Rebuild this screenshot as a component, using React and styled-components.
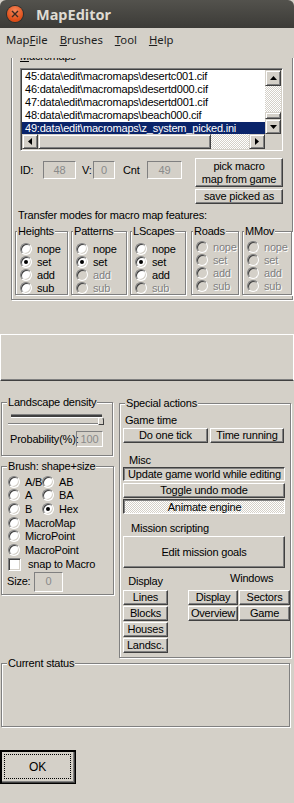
import React from 'react';
import styled, { createGlobalStyle, css } from 'styled-components';

const FACE = '#d4d0c8';
const FONT = `"Liberation Sans Narrow", "Liberation Sans", Arial, sans-serif`;

const GlobalStyle = createGlobalStyle`
  body {
    margin: 0;
    background: #ecebe8;
  }
`;

const Window = styled.div`
  width: 294px;
  height: 803px;
  overflow: hidden;
  background: ${FACE};
  font-family: ${FONT};
  font-size: 11px;
  letter-spacing: -0.2px;
  color: #000;
  display: flex;
  flex-direction: column;
`;

const TitleBar = styled.header`
  height: 28px;
  flex-shrink: 0;
  display: flex;
  align-items: center;
  gap: 13px;
  padding-left: 7px;
  background: linear-gradient(#53524d, #3c3b37);
  border-radius: 6px 6px 0 0;
  color: #dfdbd2;
  letter-spacing: 0;
  font: bold 14.5px 'Noto Sans', 'Liberation Sans', sans-serif;
`;

const CloseBtn = styled.span`
  width: 16px;
  height: 16px;
  border-radius: 50%;
  background: radial-gradient(circle at 50% 30%, #f6875a, #de4d17 70%);
  box-shadow: 0 0 0 1px #2f2e2b;
  display: flex;
  align-items: center;
  justify-content: center;
`;

const MenuBar = styled.nav`
  height: 30px;
  flex-shrink: 0;
  display: flex;
  align-items: flex-start;
  gap: 12px;
  padding: 4px 0 0 6px;
  box-sizing: border-box;
  font: 11.3px 'Noto Sans', 'Liberation Sans', sans-serif;
  letter-spacing: 0;
  line-height: 15px;
  color: #1e1e1e;
`;

const Client = styled.main`
  flex: 1;
  overflow: hidden;
  display: flex;
  flex-direction: column;
`;

const Group = styled.section`
  position: relative;
  box-sizing: border-box;
  flex-shrink: 0;
  width: ${(p) => p.$w}px;
  height: ${(p) => p.$h}px;
  margin: ${(p) => p.$m || '0'};
  border: 1px solid #808080;
  box-shadow: inset 1px 1px #fff, 1px 1px #fff;
  display: flex;
  flex-direction: column;
`;

const Legend = styled.span`
  position: absolute;
  top: -7px;
  left: ${(p) => (p.$x === undefined ? 5 : p.$x)}px;
  padding: 0 1px;
  line-height: 13px;
  background: ${FACE};
  white-space: nowrap;
`;

const Text = styled.div`
  line-height: 13px;
  white-space: nowrap;
  margin: ${(p) => p.$m || '0'};
  width: ${(p) => (p.$w ? `${p.$w}px` : 'auto')};
  flex-shrink: 0;
  text-align: ${(p) => p.$align || 'left'};
  ${(p) =>
    p.$dis &&
    css`
      color: #808080;
      text-shadow: 1px 1px #fff;
    `}
`;

const ListBox = styled.div`
  box-sizing: border-box;
  width: 263px;
  height: 83px;
  margin: 11px 0 0 8px;
  padding: 1px;
  border: 1px solid;
  border-color: #808080 #fff #fff #808080;
  box-shadow: inset 1px 1px #404040, inset -1px -1px ${FACE};
  display: grid;
  grid-template-columns: 1fr 16px;
  grid-template-rows: 1fr 15px;
  background: #fff;
`;

const Items = styled.div`
  overflow: hidden;
`;

const Item = styled.div`
  height: 13px;
  line-height: 13px;
  padding-left: 3px;
  white-space: nowrap;
  ${(p) =>
    p.$sel &&
    css`
      background: #0a246a;
      color: #fff;
    `}
`;

const dither = css`
  background: repeating-conic-gradient(#fff 0 25%, ${FACE} 0 50%) 0 0 / 2px 2px;
`;

const VScroll = styled.div`
  display: flex;
  flex-direction: column;
`;

const HScroll = styled.div`
  display: flex;
`;

const Track = styled.div`
  flex: 1;
  ${dither}
`;

const Corner = styled.div`
  background: ${FACE};
`;

const ScrollPart = styled.div`
  box-sizing: border-box;
  flex-shrink: 0;
  width: ${(p) => (p.$w ? `${p.$w}px` : 'auto')};
  height: ${(p) => (p.$h ? `${p.$h}px` : 'auto')};
  background: ${FACE};
  border: 1px solid;
  border-color: ${FACE} #404040 #404040 ${FACE};
  box-shadow: inset 1px 1px #fff, inset -1px -1px #808080;
  display: flex;
  align-items: center;
  justify-content: center;
`;

const Row = styled.div`
  display: flex;
  align-items: ${(p) => p.$align || 'center'};
  margin: ${(p) => p.$m || '0'};
  gap: ${(p) => p.$gap || 0}px;
  flex-shrink: 0;
`;

const Col = styled.div`
  display: flex;
  flex-direction: column;
  margin: ${(p) => p.$m || '0'};
  gap: ${(p) => p.$gap || 0}px;
  flex-shrink: 0;
  width: ${(p) => (p.$w ? `${p.$w}px` : 'auto')};
`;

const Field = styled.div`
  box-sizing: border-box;
  flex-shrink: 0;
  width: ${(p) => p.$w}px;
  height: ${(p) => p.$h || 18}px;
  margin: ${(p) => p.$m || '0'};
  border: 1px solid;
  border-color: #808080 #fff #fff #808080;
  color: #8a8a8a;
  display: flex;
  align-items: center;
  justify-content: center;
  line-height: 13px;
`;

const Button = styled.div`
  box-sizing: border-box;
  flex-shrink: 0;
  width: ${(p) => p.$w}px;
  height: ${(p) => p.$h || 15}px;
  margin: ${(p) => p.$m || '0'};
  background: ${FACE};
  border: 1px solid;
  border-color: #fff #404040 #404040 #fff;
  box-shadow: inset -1px -1px #808080;
  display: flex;
  flex-direction: column;
  align-items: center;
  justify-content: center;
  line-height: 13px;
  text-align: center;
  white-space: nowrap;
  ${(p) =>
    p.$pressed &&
    css`
      border-color: #404040 #fff #fff #404040;
      box-shadow: inset 1px 1px #808080;
      padding: 1px 0 0 1px;
    `}
  ${(p) => p.$dither && dither}
`;

const Panel = styled.div`
  box-sizing: border-box;
  height: 47px;
  margin-top: 34px;
  flex-shrink: 0;
  border: 1px solid #fff;
  border-bottom-color: #404040;
  box-shadow: inset 0 -1px #808080;
`;

const RadioWrap = styled.div`
  display: flex;
  align-items: center;
  gap: 5px;
  height: ${(p) => p.$h || 13}px;
  flex-shrink: 0;
  width: ${(p) => (p.$w ? `${p.$w}px` : 'auto')};
  white-space: nowrap;
  ${(p) =>
    p.$dis &&
    css`
      color: #808080;
      text-shadow: 1px 1px #fff;
    `}
`;

const Circle = styled.span`
  box-sizing: border-box;
  position: relative;
  flex-shrink: 0;
  width: 12px;
  height: 12px;
  border-radius: 50%;
  border: 1px solid;
  border-color: #808080 #fff #fff #808080;
  box-shadow: inset 1px 1px #404040, inset -1px -1px ${FACE};
  background: ${(p) => (p.$dis ? FACE : '#fff')};
  ${(p) =>
    p.$on &&
    css`
      &::after {
        content: '';
        position: absolute;
        left: 3px;
        top: 3px;
        width: 4px;
        height: 4px;
        border-radius: 50%;
        background: #000;
      }
    `}
`;

const Check = styled.span`
  box-sizing: border-box;
  flex-shrink: 0;
  width: 13px;
  height: 13px;
  border: 1px solid;
  border-color: #808080 #fff #fff #808080;
  box-shadow: inset 1px 1px #404040, inset -1px -1px ${FACE};
  background: #fff;
`;

const Channel = styled.div`
  width: 91px;
  height: 4px;
  margin: 11px 0 0 9px;
  background: linear-gradient(#808080 0 1px, #404040 1px 3px, #fff 3px);
`;

const Rail = styled.div`
  position: relative;
  width: 96px;
  height: 2px;
  margin: 5px 0 0 6px;
  background: linear-gradient(#808080 0 1px, #fff 1px);
`;

const Thumb = styled.span`
  position: absolute;
  right: 0;
  bottom: 0;
  box-sizing: border-box;
  width: 6px;
  height: 8px;
  background: ${FACE};
  border: 1px solid;
  border-color: #fff #404040 #404040 #fff;
  border-radius: 2px 3px 0 0;
`;

const SubGroupRadios = styled.div`
  display: flex;
  flex-direction: column;
  padding: ${(p) => (p.$up ? 8 : 10)}px 0 0 4px;
`;

const OkButton = styled.div`
  box-sizing: border-box;
  width: 76px;
  height: 34px;
  margin-top: 23px;
  flex-shrink: 0;
  border: 1px solid #000;
  border-width: 2px 1px 1px 2px;
  box-shadow: inset -1px -1px #404040, inset -2px -2px #808080;
  padding: 2px 4px 4px 2px;
  display: flex;
`;

const FocusRect = styled.div`
  flex: 1;
  border: 1px dotted #000;
  display: flex;
  align-items: center;
  justify-content: center;
  font-size: 12px;
`;

const Arrow = ({ dir }) => {
  const vert = dir === 'up' || dir === 'down';
  const pts = {
    up: '0,4 3.5,0 7,4',
    down: '0,0 3.5,4 7,0',
    left: '4,0 0,3.5 4,7',
    right: '0,0 4,3.5 0,7',
  }[dir];
  return (
    <svg width={vert ? 7 : 4} height={vert ? 4 : 7} viewBox={vert ? '0 0 7 4' : '0 0 4 7'}>
      <polygon points={pts} fill="#000" />
    </svg>
  );
};

const Radio = ({ label, on, dis, w, h }) => (
  <RadioWrap $dis={dis} $w={w} $h={h}>
    <Circle $on={on} $dis={dis} />
    {label}
  </RadioWrap>
);

const MAPS = [
  '45:data\\edit\\macromaps\\desertc001.cif',
  '46:data\\edit\\macromaps\\desertd000.cif',
  '47:data\\edit\\macromaps\\desertd001.cif',
  '48:data\\edit\\macromaps\\beach000.cif',
  '49:data\\edit\\macromaps\\z_system_picked.ini',
];

const MODES = ['nope', 'set', 'add', 'sub'];

const FEATURES = [
  { name: 'Heights', w: 53, on: 1, dis: [] },
  { name: 'Patterns', w: 56, on: 1, dis: [2, 3] },
  { name: 'LScapes', w: 56, on: 1, dis: [3] },
  { name: 'Roads', w: 48, on: -1, dis: [0, 1, 2, 3], up: true, gap: 5 },
  { name: 'MMov', w: 50, on: -1, dis: [0, 1, 2, 3], up: true, gap: 3 },
];

export default function App() {
  return (
    <Window>
      <GlobalStyle />
      <TitleBar>
        <CloseBtn>
          <svg width="8" height="8" viewBox="0 0 8 8">
            <path d="M1 1 L7 7 M7 1 L1 7" stroke="#3b2a22" strokeWidth="1.4" />
          </svg>
        </CloseBtn>
        MapEditor
      </TitleBar>
      <MenuBar>
        <span>
          Map<u>F</u>ile
        </span>
        <span>
          <u>B</u>rushes
        </span>
        <span>
          <u>T</u>ool
        </span>
        <span>
          <u>H</u>elp
        </span>
      </MenuBar>

      <Client>
        <Group $w={282} $h={244} $m="-2px 0 0 11px">
          <Legend $x={7}>
            <u>M</u>acromaps
          </Legend>
          <ListBox>
            <Items>
              {MAPS.map((m, i) => (
                <Item key={m} $sel={i === MAPS.length - 1}>
                  {m}
                </Item>
              ))}
            </Items>
            <VScroll>
              <ScrollPart $h={16}>
                <Arrow dir="up" />
              </ScrollPart>
              <Track />
              <ScrollPart $h={7} />
              <ScrollPart $h={15}>
                <Arrow dir="down" />
              </ScrollPart>
            </VScroll>
            <HScroll>
              <ScrollPart $w={16}>
                <Arrow dir="left" />
              </ScrollPart>
              <ScrollPart $w={173} />
              <Track />
              <ScrollPart $w={16}>
                <Arrow dir="right" />
              </ScrollPart>
            </HScroll>
            <Corner />
          </ListBox>

          <Row $align="flex-start" $m="7px 0 0 8px">
            <Row $m="3px 0 0 0">
              <Text $w={23}>ID:</Text>
              <Field $w={33}>48</Field>
              <Text $w={11} $m="0 0 0 6px">
                V:
              </Text>
              <Field $w={22}>0</Field>
              <Text $w={24} $m="0 0 0 8px">
                Cnt
              </Text>
              <Field $w={35}>49</Field>
            </Row>
            <Col $m="0 0 0 13px" $gap={2}>
              <Button $w={88} $h={29}>
                <span>pick macro</span>
                <span>map from game</span>
              </Button>
              <Button $w={88} $h={15}>
                save picked as
              </Button>
            </Col>
          </Row>

          <Text $m="5px 0 0 6px">Transfer modes for macro map features:</Text>

          <Row $align="flex-start" $m="9px 0 0 3px">
            {FEATURES.map((f, fi) => (
              <Group key={f.name} $w={f.w} $h={64} $m={fi === 0 ? '0' : `0 0 0 ${f.gap || 3}px`}>
                <Legend $x={1}>{f.name}</Legend>
                <SubGroupRadios $up={f.up}>
                  {MODES.map((m, i) => (
                    <Radio key={m} label={m} on={f.on === i} dis={f.dis.includes(i)} />
                  ))}
                </SubGroupRadios>
              </Group>
            ))}
          </Row>
        </Group>

        <Panel />

        <Row $align="flex-start" $m="21px 0 0 1px">
          <Col>
            <Group $w={112} $h={54}>
              <Legend>Landscape density</Legend>
              <Channel />
              <Rail>
                <Thumb />
              </Rail>
              <Row $m="6px 0 0 8px">
                <Text $w={66}>Probability(%):</Text>
                <Field $w={27} $h={16}>
                  100
                </Field>
              </Row>
            </Group>
            <Group $w={113} $h={129} $m="10px 0 0 0">
              <Legend>Brush: shape+size</Legend>
              <Col $m="8px 0 0 6px">
                <Row>
                  <Radio label="A/B" w={34} h={13.6} />
                  <Radio label="AB" h={13.6} />
                </Row>
                <Row>
                  <Radio label="A" w={34} h={13.6} />
                  <Radio label="BA" h={13.6} />
                </Row>
                <Row>
                  <Radio label="B" w={34} h={13.6} />
                  <Radio label="Hex" on h={13.6} />
                </Row>
                <Radio label="MacroMap" h={13.6} />
                <Radio label="MicroPoint" h={13.6} />
                <Radio label="MacroPoint" h={13.6} />
                <Row $gap={7} $m="1px 0 0 0">
                  <Check />
                  <Text>snap to Macro</Text>
                </Row>
                <Row $m="1px 0 0 -1px">
                  <Text $w={27}>Size:</Text>
                  <Field $w={29} $h={20}>
                    0
                  </Field>
                </Row>
              </Col>
            </Group>
          </Col>

          <Group $w={172} $h={255} $m="1px 0 0 5px">
            <Legend>Special actions</Legend>
            <Text $m="10px 0 0 5px">Game time</Text>
            <Row $m="1px 0 0 3px" $gap={2}>
              <Button $w={85}>Do one tick</Button>
              <Button $w={74}>Time running</Button>
            </Row>
            <Text $m="11px 0 0 9px">Misc</Text>
            <Button $w={162} $h={14} $m="0 0 0 3px" $pressed>
              Update game world while editing
            </Button>
            <Button $w={162} $m="2px 0 0 3px">
              Toggle undo mode
            </Button>
            <Button $w={162} $m="1px 0 0 3px" $pressed $dither>
              Animate engine
            </Button>
            <Text $m="8px 0 0 11px">Mission scripting</Text>
            <Button $w={162} $h={32} $m="1px 0 0 3px">
              Edit mission goals
            </Button>
            <Row $align="flex-start" $m="4px 0 0 3px">
              <Col $w={45} $gap={1}>
                <Text $align="center" $m="3px 0 1px 0">
                  Display
                </Text>
                <Button $w={45}>Lines</Button>
                <Button $w={45}>Blocks</Button>
                <Button $w={45}>Houses</Button>
                <Button $w={45}>Landsc.</Button>
              </Col>
              <Col $m="0 0 0 20px">
                <Text $m="0 0 5px 42px">Windows</Text>
                <Row $gap={1}>
                  <Button $w={50}>Display</Button>
                  <Button $w={51}>Sectors</Button>
                </Row>
                <Row $gap={1} $m="1px 0 0 0">
                  <Button $w={50}>Overview</Button>
                  <Button $w={51}>Game</Button>
                </Row>
              </Col>
            </Row>
          </Group>
        </Row>

        <Group $w={289} $h={64} $m="5px 0 0 1px">
          <Legend>Current status</Legend>
        </Group>

        <OkButton>
          <FocusRect>OK</FocusRect>
        </OkButton>
      </Client>
    </Window>
  );
}
